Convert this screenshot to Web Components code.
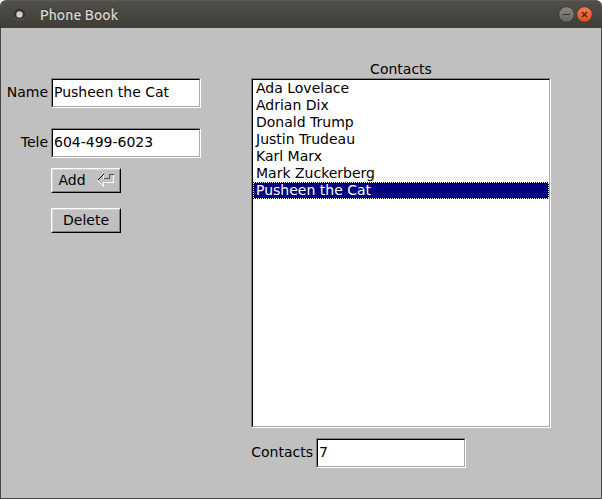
<!DOCTYPE html>
<html lang="en">
<head>
<meta charset="utf-8">
<title>Phone Book</title>
<style>
html,body{margin:0;height:100%;overflow:hidden;background:#fff}
body{font:14px/17px "DejaVu Sans",sans-serif;color:#000}
</style>
</head>
<body>
<phone-book></phone-book>
<script>
function define(name, html, setup) {
  const t = document.createElement('template');
  t.innerHTML = html;
  customElements.define(name, class extends HTMLElement {
    constructor() {
      super();
      this.attachShadow({mode: 'open'}).append(t.content.cloneNode(true));
    }
    connectedCallback() { if (setup) setup(this, this.shadowRoot); }
  });
}

define('title-bar', `
<style>
:host{display:flex;align-items:center;box-sizing:border-box;height:28px;padding:0 9px 0 13px;
 background:linear-gradient(#504f4a,#3e3d38);border-top:1px solid #5c5b56;border-radius:6px 6px 0 0;
 color:#dfdbd2;font:500 14px/20px Ubuntu,"Noto Sans",sans-serif}
svg{display:block;flex:none}
.title{margin-left:14px;flex:1;letter-spacing:.1px;white-space:nowrap}
.title{text-shadow:0 -1px #2c2b28}
.buttons{display:flex;gap:1px}
</style>
<svg width="13" height="13" viewBox="0 0 13 13"><circle cx="6.5" cy="6.5" r="5.7" fill="#33322e"/><path d="M1.5 9.2A5.7 5.7 0 0 0 11.5 9.2" fill="none" stroke="#666560"/><circle cx="6.5" cy="6.5" r="3.2" fill="#d2cec7"/></svg>
<div class="title"><slot></slot></div>
<div class="buttons">
<svg width="17" height="17" viewBox="0 0 17 17"><defs><linearGradient id="g" x2="0" y2="1"><stop stop-color="#8b8981"/><stop offset="1" stop-color="#65645e"/></linearGradient></defs><circle cx="8.5" cy="8.5" r="7.8" fill="url(#g)" stroke="#33322e" stroke-width=".8"/><path d="M5 8.5h7" stroke="#35342f"/></svg>
<svg width="17" height="17" viewBox="0 0 17 17"><defs><linearGradient id="r" x2="0" y2="1"><stop stop-color="#f68058"/><stop offset="1" stop-color="#e24b1b"/></linearGradient></defs><circle cx="8.5" cy="8.5" r="7.8" fill="url(#r)" stroke="#33322e" stroke-width=".8"/><path d="M6 6l5 5M11 6l-5 5" stroke="#3d2519" stroke-width="1.2"/></svg>
</div>`);

define('sunken-box', `
<style>
:host{display:block;box-sizing:border-box;background:#fff;border:1px solid;border-color:#808080 #fff #fff #808080}
.inner{box-sizing:border-box;height:100%;border:1px solid;border-color:#000 #aaa #aaa #000}
</style><div class="inner"><slot></slot></div>`);

define('labeled-field', `
<style>
:host{display:grid;grid-template-columns:var(--label,47px) 150px;column-gap:3px;align-items:center;height:30px}
.label{text-align:right;white-space:nowrap;position:relative;top:-1px}
sunken-box{height:30px}
.value{padding:4px 1px;line-height:17px;white-space:nowrap}
</style><span class="label"></span><sunken-box><div class="value"><slot></slot></div></sunken-box>`,
(el, root) => { root.querySelector('.label').textContent = el.getAttribute('label'); });

define('push-button', `
<style>
:host{display:flex;box-sizing:border-box;width:70px;height:25px;background:#c0c0c0;border:1px solid;border-color:#fff #000 #000 #fff}
.inner{flex:1;display:flex;align-items:center;justify-content:center;border:1px solid;border-color:#d5d5d5 #808080 #808080 #d5d5d5}
</style><div class="inner"><slot></slot></div>`);

define('return-arrow', `
<style>:host{display:block;width:17px;height:13px}svg{display:block}</style>
<svg width="17" height="13" viewBox="0 0 17 13" shape-rendering="crispEdges" fill="none">
<path d="M.5 6.5l6 6V8.5h10V.5M6.5 5V0" stroke="#fff"/>
<path d="M.5 6.5l6-6" stroke="#000"/>
<path d="M7 4.5h5.5v-4H17" stroke="#555"/></svg>`);

define('contact-row', `
<style>
:host{display:block;height:17px;padding-left:3px;line-height:17px;white-space:nowrap}
:host([selected]){background:
 repeating-linear-gradient(90deg,#000 0 1px,#fff 1px 2px) 0 0/100% 1px no-repeat,
 repeating-linear-gradient(90deg,#000 0 1px,#fff 1px 2px) 0 100%/100% 1px no-repeat,
 repeating-linear-gradient(#000 0 1px,#fff 1px 2px) 0 0/1px 100% no-repeat,
 repeating-linear-gradient(#000 0 1px,#fff 1px 2px) 100% 0/1px 100% no-repeat,#000080;color:#fff}
</style><slot></slot>`);

define('phone-book', `
<style>
:host{display:flex;flex-direction:column;box-sizing:border-box;width:602px;height:499px}
.client{flex:1;display:flex;box-sizing:border-box;background:#c0c0c0;border:1px solid #484848;border-top:0}
.form{width:200px;padding-top:50px;display:flex;flex-direction:column}
.form labeled-field+labeled-field{margin-top:20px}
.actions{display:flex;flex-direction:column;gap:15px;padding:10px 0 0 50px}
.add{margin-right:11px}
.list{width:300px;margin-left:50px;padding-top:33px}
.heading{text-align:center;height:17px}
sunken-box{height:350px}
labeled-field{--label:47px}
.count{--label:62px;margin-top:10px}
</style>
<title-bar>Phone Book</title-bar>
<div class="client">
<div class="form">
<labeled-field label="Name">Pusheen the Cat</labeled-field>
<labeled-field label="Tele">604-499-6023</labeled-field>
<div class="actions"><push-button><span class="add">Add</span><return-arrow></return-arrow></push-button><push-button>Delete</push-button></div>
</div>
<div class="list">
<div class="heading">Contacts</div>
<sunken-box>
<contact-row>Ada Lovelace</contact-row><contact-row>Adrian Dix</contact-row><contact-row>Donald Trump</contact-row><contact-row>Justin Trudeau</contact-row><contact-row>Karl Marx</contact-row><contact-row>Mark Zuckerberg</contact-row><contact-row selected>Pusheen the Cat</contact-row>
</sunken-box>
<labeled-field class="count" label="Contacts">7</labeled-field>
</div>
</div>`);
</script>
</body>
</html>
